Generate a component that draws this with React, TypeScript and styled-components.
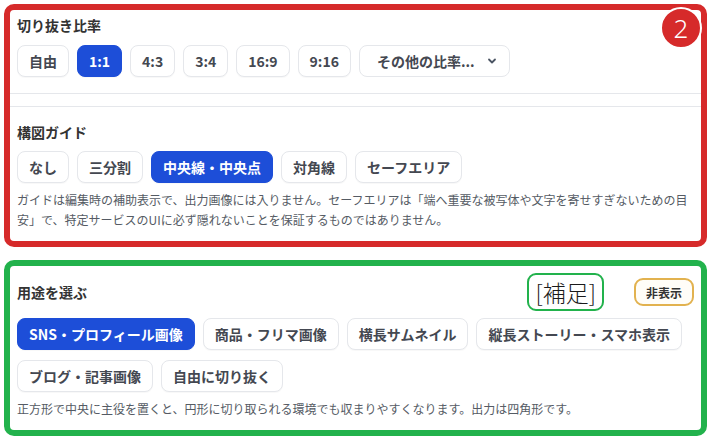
import React from 'react';
import styled, { createGlobalStyle, css } from 'styled-components';

const GlobalStyle = createGlobalStyle`
  html, body {
    margin: 0;
    padding: 0;
    background: #ffffff;
  }
  body {
    font-family: "Noto Sans CJK JP", "Noto Sans", sans-serif;
    color: #333333;
  }
`;

const Page = styled.div`
  width: 710px;
  height: 440px;
  box-sizing: border-box;
  padding: 4px 3px 4px 4px;
  display: flex;
  flex-direction: column;
  gap: 13px;
`;

const Section = styled.section<{ $tone: 'red' | 'green' }>`
  position: relative;
  border: 6px solid ${(p) => (p.$tone === 'red' ? '#d62a2a' : '#22b24c')};
  border-radius: 10px;
  background: #ffffff;
  display: flex;
  flex-direction: column;
  ${(p) =>
    p.$tone === 'green' &&
    css`
      padding: 7px 7px 11px;
      gap: 7px;
    `}
`;

const Badge = styled.div`
  position: absolute;
  top: -3px;
  right: -1px;
  width: 38px;
  height: 38px;
  border-radius: 50%;
  border: 2px solid #ffffff;
  background: #d62a2a;
  color: #ffffff;
  font-family: "Noto Sans", "Liberation Sans", sans-serif;
  font-size: 26px;
  font-weight: 300;
  display: flex;
  align-items: center;
  justify-content: center;
  line-height: 1;
`;

const Group = styled.div<{ $rule: 'bottom' | 'top' }>`
  display: flex;
  flex-direction: column;
  padding: 0 7px;
  ${(p) =>
    p.$rule === 'bottom'
      ? css`
          padding-top: 5px;
          padding-bottom: 16px;
          gap: 10px;
          border-bottom: 1px solid #e5e7eb;
        `
      : css`
          margin-top: 12px;
          padding-top: 15px;
          padding-bottom: 11px;
          border-top: 1px solid #e5e7eb;
        `}
`;

const Heading = styled.h3`
  margin: 0;
  font-size: 14px;
  line-height: 20px;
  font-weight: 700;
  color: #333333;
`;

const ChipRow = styled.div<{ $gapTop?: number }>`
  display: flex;
  flex-wrap: wrap;
  gap: 10px 8px;
  margin-top: ${(p) => p.$gapTop ?? 0}px;
`;

const Chip = styled.button<{ $active?: boolean }>`
  height: 32px;
  box-sizing: border-box;
  padding: 0 11px;
  border-radius: 8px;
  border: 1px solid ${(p) => (p.$active ? '#1d4ed8' : '#e5e7eb')};
  background: ${(p) => (p.$active ? '#1d4ed8' : '#ffffff')};
  color: ${(p) => (p.$active ? '#ffffff' : '#444851')};
  font-family: inherit;
  font-size: 14px;
  font-weight: 700;
  font-variant-numeric: proportional-nums;
  white-space: nowrap;
  box-shadow: 0 1px 1px rgba(0, 0, 0, 0.03);
`;

const SelectBox = styled.div`
  width: 151px;
  height: 32px;
  box-sizing: border-box;
  padding: 0 12px 0 17px;
  border-radius: 8px;
  border: 1px solid #e5e7eb;
  background: #ffffff;
  display: flex;
  align-items: center;
  justify-content: space-between;
  font-size: 14px;
  font-weight: 700;
  color: #444851;
`;

const Note = styled.p<{ $gapTop?: number }>`
  margin: ${(p) => p.$gapTop ?? 0}px 0 0;
  font-size: 12px;
  line-height: 20px;
  color: #555b64;
`;

const HeaderRow = styled.div`
  display: flex;
  align-items: center;
  justify-content: space-between;
  height: 38px;
`;

const HeaderRight = styled.div`
  display: flex;
  align-items: center;
  gap: 30px;
`;

const Annotation = styled.span`
  height: 38px;
  box-sizing: border-box;
  padding: 0 6px;
  border: 2px solid #22b24c;
  border-radius: 9px;
  display: flex;
  align-items: center;
  font-size: 23px;
  font-weight: 300;
  color: #1a1a1a;
`;

const HideButton = styled.button`
  height: 28px;
  box-sizing: border-box;
  padding: 0 10px;
  border: 2px solid #e2b24f;
  border-radius: 9px;
  background: #fffdf8;
  font-family: inherit;
  font-size: 12px;
  font-weight: 700;
  color: #333333;
`;

const Chevron = () => (
  <svg width="10" height="10" viewBox="0 0 10 10" fill="none">
    <path d="M2 3.5 L5 6.5 L8 3.5" stroke="#4b5563" strokeWidth="1.8" strokeLinecap="round" strokeLinejoin="round" />
  </svg>
);

const ratios = ['自由', '1:1', '4:3', '3:4', '16:9', '9:16'];
const guides = ['なし', '三分割', '中央線・中央点', '対角線', 'セーフエリア'];
const uses = [
  'SNS・プロフィール画像',
  '商品・フリマ画像',
  '横長サムネイル',
  '縦長ストーリー・スマホ表示',
  'ブログ・記事画像',
  '自由に切り抜く',
];

const App = () => {
  return (
    <>
      <GlobalStyle />
      <Page>
        {/* 切り抜き設定 */}
        <Section $tone="red">
          <Badge>2</Badge>
          <Group $rule="bottom">
            <Heading>切り抜き比率</Heading>
            <ChipRow>
              {ratios.map((r) => (
                <Chip key={r} $active={r === '1:1'}>
                  {r}
                </Chip>
              ))}
              <SelectBox>
                <span>その他の比率...</span>
                <Chevron />
              </SelectBox>
            </ChipRow>
          </Group>
          <Group $rule="top">
            <Heading>構図ガイド</Heading>
            <ChipRow $gapTop={9}>
              {guides.map((g) => (
                <Chip key={g} $active={g === '中央線・中央点'}>
                  {g}
                </Chip>
              ))}
            </ChipRow>
            <Note $gapTop={7}>
              ガイドは編集時の補助表示で、出力画像には入りません。セーフエリアは「端へ重要な被写体や文字を寄せすぎないための目安」で、特定サービスのUIに必ず隠れないことを保証するものではありません。
            </Note>
          </Group>
        </Section>

        {/* 用途 */}
        <Section $tone="green">
          <HeaderRow>
            <Heading>用途を選ぶ</Heading>
            <HeaderRight>
              <Annotation>[補足]</Annotation>
              <HideButton>非表示</HideButton>
            </HeaderRight>
          </HeaderRow>
          <ChipRow>
            {uses.map((u) => (
              <Chip key={u} $active={u === 'SNS・プロフィール画像'}>
                {u}
              </Chip>
            ))}
          </ChipRow>
          <Note>正方形で中央に主役を置くと、円形に切り取られる環境でも収まりやすくなります。出力は四角形です。</Note>
        </Section>
      </Page>
    </>
  );
};

export default App;
